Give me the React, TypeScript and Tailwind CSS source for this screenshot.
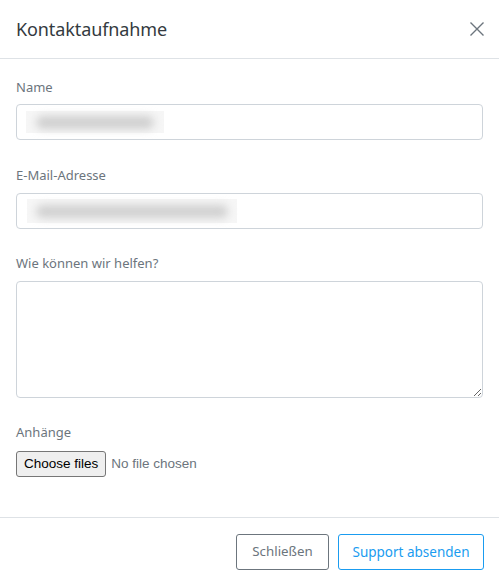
import React from "react";

export default function App() {
  return (
    <div className="w-[499px] h-[586px] bg-white flex flex-col" style={{ fontFamily: "'Noto Sans', Inter, sans-serif" }}>
      <div className="h-[59px] flex items-center justify-between pl-4 pr-[14px] border-b border-[#dee2e6] shrink-0">
        <h1 className="text-[18px] text-[#343a40] leading-none tracking-[-0.1px]">Kontaktaufnahme</h1>
        <svg width="16" height="16" viewBox="0 0 16 16" className="text-[#6c757d]">
          <path d="M1.5 1.5 L14.5 14.5 M14.5 1.5 L1.5 14.5" stroke="currentColor" strokeWidth="1.4" fill="none" />
        </svg>
      </div>
      <div className="flex-1 px-4 pt-[18px]">
        <label className="block text-[13px] text-[#6c757d] leading-[20px]">Name</label>
        <div className="mt-[7px] h-[36px] border border-[#ced4da] rounded-[4px] flex items-center pl-[9px]">
          <div className="w-[138px] h-[22px] bg-[#f6f6f6] flex items-center justify-center">
            <div className="w-[118px] h-[13px] rounded-full bg-[#cfcfcf] blur-[4px]" />
          </div>
        </div>
        <label className="block mt-[25px] text-[13px] text-[#6c757d] leading-[20px]">E-Mail-Adresse</label>
        <div className="mt-[8px] h-[36px] border border-[#ced4da] rounded-[4px] flex items-center pl-[10px]">
          <div className="w-[210px] h-[24px] bg-[#f6f6f6] flex items-center justify-center">
            <div className="w-[192px] h-[13px] rounded-full bg-[#d0d0d0] blur-[4px]" />
          </div>
        </div>
        <label className="block mt-[24px] text-[13px] text-[#6c757d] leading-[20px]">Wie können wir helfen?</label>
        <textarea className="block mt-[8px] w-full h-[117px] border border-[#ced4da] rounded-[4px] outline-none" />
        <label className="block mt-[24px] text-[13px] text-[#6c757d] leading-[20px]">Anhänge</label>
        <div className="mt-[9px] flex items-center" style={{ fontFamily: "'Liberation Sans', Arial, sans-serif" }}>
          <div className="h-[26px] px-[7px] bg-[#efefef] border border-[#767676] rounded-[3px] text-[13.5px] text-black flex items-center">Choose files</div>
          <span className="ml-[5px] text-[13.5px] text-[#6c757d]">No file chosen</span>
        </div>
      </div>
      <div className="h-[69px] shrink-0 border-t border-[#dee2e6] flex items-center justify-end gap-[9px] pr-[15px]">
        <button className="h-[36px] w-[93px] border border-[#6c757d] rounded-[3px] text-[13.3px] text-[#6c757d]">Schließen</button>
        <button className="h-[36px] w-[146px] border border-[#1a9cf0] rounded-[3px] text-[13.5px] text-[#1a9cf0]">Support absenden</button>
      </div>
    </div>
  );
}
